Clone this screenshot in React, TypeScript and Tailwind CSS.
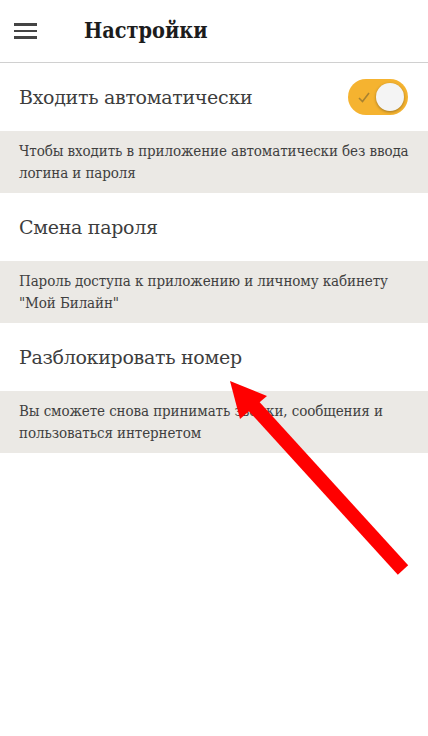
import React from "react";

const font = { fontFamily: '"DejaVu Serif", "Liberation Serif", serif' };

function Toggle() {
  return (
    <div className="relative w-[60px] h-[36px] rounded-full bg-[#f5b330] flex items-center">
      <svg className="absolute left-[9px] top-[11px]" width="14" height="14" viewBox="0 0 14 14">
        <path d="M2 8 L5.5 11.5 L12 3" fill="none" stroke="#a88230" strokeWidth="1.6" />
      </svg>
      <div className="absolute right-[4px] top-[4px] w-[28px] h-[28px] rounded-full bg-[#f4f4f4] shadow-[0_1px_3px_rgba(0,0,0,0.35)]" />
    </div>
  );
}

function Row({ title, right }: { title: string; right?: React.ReactNode }) {
  return (
    <div className="flex items-center justify-between bg-white px-[19px] pr-[20px] h-[68px]">
      <span className="text-[19px] text-[#3d3d3d] tracking-[-0.3px]">{title}</span>
      {right}
    </div>
  );
}

function Hint({ text }: { text: React.ReactNode }) {
  return (
    <div className="bg-[#ebe9e5] px-[19px] pt-[9px] pb-[10px] h-[62px] text-[15px] leading-[22px] text-[#3f3f3f] font-stretch-condensed tracking-[-0.1px] whitespace-nowrap">
      {text}
    </div>
  );
}

export default function App() {
  return (
    <div className="relative w-[428px] h-[736px] bg-white overflow-hidden" style={font}>
      {/* Header */}
      <header className="flex items-center h-[63px] border-b border-[#d0d0d0]">
        <div className="flex flex-col gap-[4px] ml-[14px] w-[23px]">
          <span className="block h-[2.5px] bg-[#444]" />
          <span className="block h-[2.5px] bg-[#444]" />
          <span className="block h-[2.5px] bg-[#444]" />
        </div>
        <h1 className="ml-[47px] text-[21.5px] font-bold text-[#1c1c1c] font-stretch-condensed">Настройки</h1>
      </header>

      <Row title="Входить автоматически" right={<Toggle />} />
      <Hint text={<>Чтобы входить в приложение автоматически без ввода<br />логина и пароля</>} />
      <Row title="Смена пароля" />
      <Hint text={<>Пароль доступа к приложению и личному кабинету<br />"Мой Билайн"</>} />
      <Row title="Разблокировать номер" />
      <Hint text={<>Вы сможете снова принимать звонки, сообщения и<br />пользоваться интернетом</>} />

      {/* red annotation arrow */}
      <svg className="absolute left-0 top-0 pointer-events-none" width="428" height="736" viewBox="0 0 428 736">
        <line x1="403" y1="570" x2="250" y2="402" stroke="#ff0000" strokeWidth="14" />
        <polygon points="230,381 267,396 240,419" fill="#ff0000" />
      </svg>
    </div>
  );
}
